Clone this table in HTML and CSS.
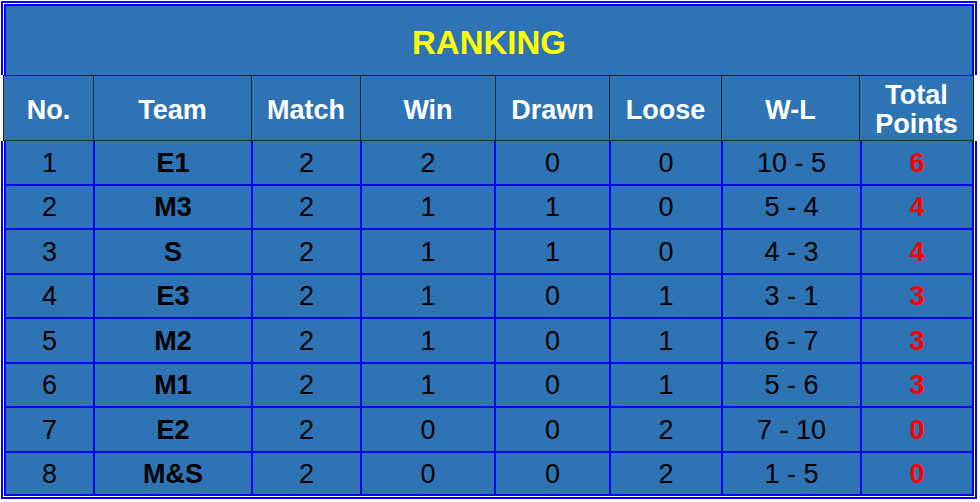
FILE: index.html
```html
<!DOCTYPE html>
<html lang="en">
<head>
<meta charset="utf-8">
<title>Ranking</title>
<link rel="stylesheet" href="styles.css">
</head>
<body>
<div class="sheet">
  <div class="title">RANKING</div>
  <div class="head">
    <div class="hc">No.</div>
    <div class="hc">Team</div>
    <div class="hc">Match</div>
    <div class="hc">Win</div>
    <div class="hc">Drawn</div>
    <div class="hc">Loose</div>
    <div class="hc">W-L</div>
    <div class="hc two">Total<br>Points</div>
  </div>
  <div class="body">
    <div class="c">1</div><div class="c team">E1</div><div class="c">2</div><div class="c">2</div><div class="c">0</div><div class="c">0</div><div class="c">10 - 5</div><div class="c pts">6</div>
    <div class="c">2</div><div class="c team">M3</div><div class="c">2</div><div class="c">1</div><div class="c">1</div><div class="c">0</div><div class="c">5 - 4</div><div class="c pts">4</div>
    <div class="c">3</div><div class="c team">S</div><div class="c">2</div><div class="c">1</div><div class="c">1</div><div class="c">0</div><div class="c">4 - 3</div><div class="c pts">4</div>
    <div class="c">4</div><div class="c team">E3</div><div class="c">2</div><div class="c">1</div><div class="c">0</div><div class="c">1</div><div class="c">3 - 1</div><div class="c pts">3</div>
    <div class="c">5</div><div class="c team">M2</div><div class="c">2</div><div class="c">1</div><div class="c">0</div><div class="c">1</div><div class="c">6 - 7</div><div class="c pts">3</div>
    <div class="c">6</div><div class="c team">M1</div><div class="c">2</div><div class="c">1</div><div class="c">0</div><div class="c">1</div><div class="c">5 - 6</div><div class="c pts">3</div>
    <div class="c">7</div><div class="c team">E2</div><div class="c">2</div><div class="c">0</div><div class="c">0</div><div class="c">2</div><div class="c">7 - 10</div><div class="c pts">0</div>
    <div class="c">8</div><div class="c team">M&amp;S</div><div class="c">2</div><div class="c">0</div><div class="c">0</div><div class="c">2</div><div class="c">1 - 5</div><div class="c pts">0</div>
  </div>
</div>
</body>
</html>
```
FILE: styles.css
```css
html, body {
  margin: 0;
  padding: 0;
  background: #ffffff;
}
body {
  padding: 1px;
  font-family: "Liberation Sans", Arial, sans-serif;
}
.sheet {
  width: 976px;
}
.title {
  height: 74px;
  border: 5px double #0000ff;
  border-bottom: none;
  background: #2e74b5;
  background-clip: padding-box;
  color: #ffff00;
  font-weight: bold;
  font-size: 33px;
  display: flex;
  align-items: center;
  justify-content: center;
  padding-top: 4px;
  box-sizing: border-box;
}
.head {
  margin: 0 3px 0 2px;
  display: grid;
  grid-template-columns: 90px 158px 109px 135px 114px 112px 138px 114px;
  border-left: 1px solid #1c2733;
  border-top: 1px solid #1c2733;
  border-bottom: 1px solid #1c2733;
  background: #2e74b5;
  height: 64px;
}
.hc {
  border-right: 1px solid #1c2733;
  color: #ffffff;
  font-weight: bold;
  font-size: 27px;
  display: flex;
  align-items: center;
  justify-content: center;
  text-align: center;
  padding-top: 4px;
  box-sizing: border-box;
}
.hc.two {
  line-height: 29px;
  padding-top: 3px;
}
.body {
  border: 5px double #0000ff;
  border-top: none;
  background: #2e74b5;
  background-clip: padding-box;
  display: grid;
  grid-template-columns: 89px 158px 109px 134px 115px 112px 139px 110px;
  grid-template-rows: 45px 44px 45px 44px 45px 44px 45px 41px;
}
.c {
  border-right: 2px solid #0000ff;
  border-bottom: 2px solid #0000ff;
  color: #000000;
  font-size: 27px;
  display: flex;
  align-items: center;
  justify-content: center;
  padding-top: 1px;
  box-sizing: border-box;
}
.c:nth-child(8n) {
  border-right: none;
}
.c:nth-last-child(-n+8) {
  border-bottom: none;
}
.team {
  font-weight: bold;
}
.pts {
  color: #ff0000;
  font-weight: bold;
}
```
